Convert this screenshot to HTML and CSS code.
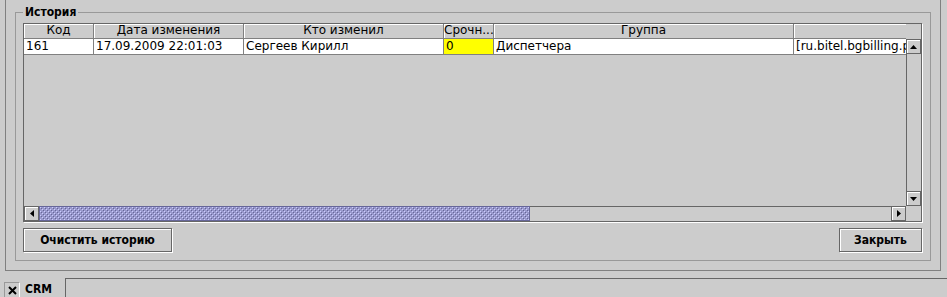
FILE: index.html
```html
<!DOCTYPE html>
<html lang="ru">
<head>
    <meta charset="UTF-8">
    <title>История</title>
    <link rel="stylesheet" href="styles.css">
</head>
<body>
    <div class="frame">
        <fieldset class="group">
            <legend>История</legend>

            <div class="scrollpane">
                <div class="thead">
                    <div class="th c1">Код</div>
                    <div class="th c2">Дата изменения</div>
                    <div class="th c3">Кто изменил</div>
                    <div class="th c4">Срочн...</div>
                    <div class="th c5">Группа</div>
                    <div class="th c6"></div>
                </div>
                <div class="corner"></div>

                <div class="viewport">
                    <div class="tr">
                        <div class="td c1">161</div>
                        <div class="td c2">17.09.2009 22:01:03</div>
                        <div class="td c3">Сергеев Кирилл</div>
                        <div class="td c4 urgent">0</div>
                        <div class="td c5">Диспетчера</div>
                        <div class="td c6">[ru.bitel.bgbilling.p</div>
                    </div>
                </div>

                <div class="vscroll">
                    <div class="arrow">
                        <svg width="7" height="4" viewBox="0 0 7 4"><polygon points="3.5,0 7,4 0,4" fill="#000"/></svg>
                    </div>
                    <div class="track"></div>
                    <div class="arrow">
                        <svg width="7" height="4" viewBox="0 0 7 4"><polygon points="0,0 7,0 3.5,4" fill="#000"/></svg>
                    </div>
                </div>

                <div class="hscroll">
                    <div class="arrow">
                        <svg width="4" height="7" viewBox="0 0 4 7"><polygon points="0,3.5 4,0 4,7" fill="#000"/></svg>
                    </div>
                    <div class="thumb">
                        <svg width="100%" height="100%">
                            <defs>
                                <pattern id="bumps" width="4" height="4" patternUnits="userSpaceOnUse">
                                    <rect width="4" height="4" fill="#9999cc"/>
                                    <rect x="0" y="0" width="1" height="1" fill="#ccccff"/>
                                    <rect x="2" y="2" width="1" height="1" fill="#ccccff"/>
                                    <rect x="1" y="1" width="1" height="1" fill="#666699"/>
                                    <rect x="3" y="3" width="1" height="1" fill="#666699"/>
                                </pattern>
                            </defs>
                            <rect width="100%" height="100%" fill="url(#bumps)"/>
                        </svg>
                    </div>
                    <div class="track"></div>
                    <div class="arrow">
                        <svg width="4" height="7" viewBox="0 0 4 7"><polygon points="0,0 4,3.5 0,7" fill="#000"/></svg>
                    </div>
                </div>
                <div class="corner"></div>
            </div>

            <div class="buttons">
                <button class="btn btn-clear">Очистить историю</button>
                <button class="btn btn-close">Закрыть</button>
            </div>
        </fieldset>
    </div>

    <div class="tabbar">
        <div class="tab">
            <span class="tab-close">
                <svg width="9" height="9" viewBox="0 0 9 9"><path d="M1 1 L8 8 M8 1 L1 8" stroke="#000" stroke-width="2"/></svg>
            </span>
            <span class="tab-title">CRM</span>
        </div>
        <div class="tab-rest"></div>
    </div>
</body>
</html>
```

FILE: styles.css
```css
html, body {
    margin: 0;
    padding: 0;
}
body {
    width: 947px;
    height: 297px;
    overflow: hidden;
    background-color: #cccccc;
    font-family: "DejaVu Sans", sans-serif;
    font-size: 12px;
    color: #000;
}
.bold, .group legend, .btn, .tab-title {
    font-family: "DejaVu Sans Condensed", "DejaVu Sans", sans-serif;
    font-stretch: semi-condensed;
    font-weight: bold;
}
.frame {
    box-sizing: border-box;
    width: 936px;
    height: 271px;
    margin-left: 5px;
    padding: 5px 9px 9px 9px;
    border: 1px solid #808080;
    border-top: none;
}
.group {
    box-sizing: border-box;
    height: 256px;
    margin: 0;
    padding: 4px 8px 0 7px;
    border: 1px solid #999999;
}
.group legend {
    margin-left: 0;
    padding: 0 2px;
    line-height: 14px;
}

/* table in scroll pane */
.scrollpane {
    box-sizing: border-box;
    width: 899px;
    height: 199px;
    border: 1px solid #666666;
    box-shadow: 1px 1px 0 #fff;
    display: grid;
    grid-template-columns: 882px 15px;
    grid-template-rows: 15px 1fr 15px;
}
.thead, .tr {
    display: flex;
    overflow: hidden;
    white-space: nowrap;
}
.th, .td {
    box-sizing: border-box;
    flex: none;
    overflow: hidden;
    border-right: 1px solid #808080;
}
.th {
    height: 15px;
    line-height: 13px;
    text-align: center;
    border-bottom: 1px solid #808080;
    box-shadow: inset 1px 1px 0 #fff;
}
.th.c6 {
    border-right: none;
}
.td {
    height: 16px;
    line-height: 15px;
    padding-left: 2px;
    background-color: #fff;
    border-bottom: 1px solid #808080;
}
.c1 { width: 70px; }
.c2 { width: 150px; }
.c3 { width: 200px; }
.c4 { width: 50px; }
.c5 { width: 300px; }
.c6 { width: 760px; }
.td.urgent {
    background-color: #ffff00;
}
.viewport {
    overflow: hidden;
}

/* scroll bars */
.arrow {
    box-sizing: border-box;
    width: 15px;
    height: 15px;
    display: flex;
    align-items: center;
    justify-content: center;
    background-color: #cccccc;
    border: 1px solid #666666;
    box-shadow: inset 1px 1px 0 #fff;
}
.vscroll {
    display: flex;
    flex-direction: column;
}
.vscroll .track {
    flex: 1;
    border-left: 1px solid #666666;
}
.hscroll {
    display: flex;
}
.hscroll .track {
    flex: 1;
    border-top: 1px solid #666666;
}
.thumb {
    box-sizing: border-box;
    width: 491px;
    height: 15px;
    border: 1px solid #666699;
    box-shadow: inset 1px 1px 0 #ccccff;
    line-height: 0;
}

/* buttons */
.buttons {
    display: flex;
    justify-content: space-between;
    margin-top: 6px;
}
.btn {
    box-sizing: border-box;
    height: 24px;
    padding: 0;
    font-size: 12px;
    color: #000;
    background-color: #cccccc;
    border: 1px solid #666666;
    box-shadow: inset 1px 1px 0 #fff, 1px 1px 0 #fff;
}
.btn-clear {
    width: 149px;
}
.btn-close {
    width: 83px;
}

/* tabs */
.tabbar {
    display: flex;
    height: 19px;
    margin-top: 7px;
}
.tab {
    box-sizing: border-box;
    width: 66px;
    display: flex;
    align-items: flex-start;
    padding: 4px 0 0 4px;
    border-right: 1px solid #666666;
}
.tab-close {
    box-sizing: border-box;
    width: 16px;
    height: 16px;
    display: flex;
    align-items: center;
    justify-content: center;
    border: 1px solid #999999;
    border-right-color: #fff;
    border-bottom-color: #fff;
}
.tab-title {
    margin-left: 5px;
    line-height: 15px;
}
.tab-rest {
    flex: 1;
    border-top: 1px solid #666666;
}
```
